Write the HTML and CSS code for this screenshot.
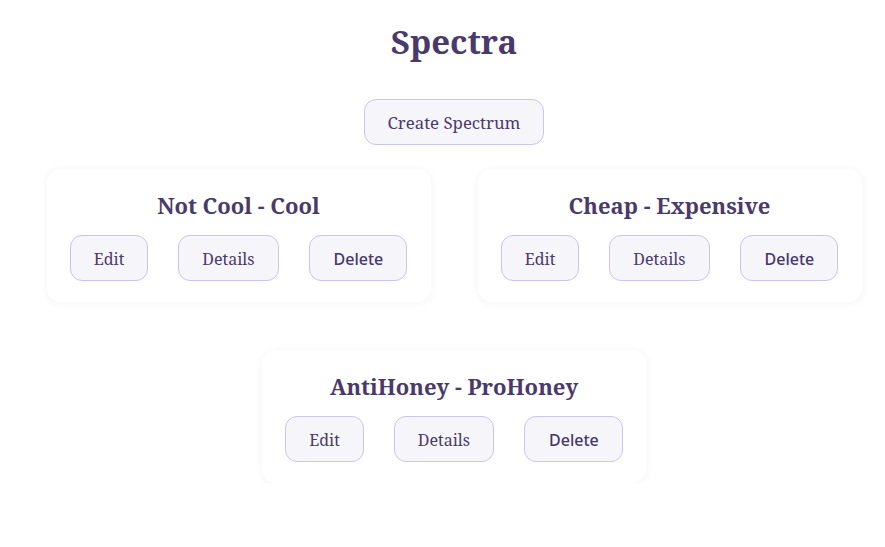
FILE: index.html
```html
<!DOCTYPE html>
<html lang="en">
<head>
<meta charset="utf-8">
<title>Spectra</title>
<link rel="stylesheet" href="styles.css">
</head>
<body>
<main class="page">
  <h1 class="title">Spectra</h1>
  <div class="create-row">
    <button class="btn btn-create">Create Spectrum</button>
  </div>
  <section class="cards">
    <div class="card">
      <h2 class="card-title">Not Cool - Cool</h2>
      <div class="actions">
        <button class="btn">Edit</button>
        <button class="btn">Details</button>
        <button class="btn btn-sans">Delete</button>
      </div>
    </div>
    <div class="card">
      <h2 class="card-title">Cheap - Expensive</h2>
      <div class="actions">
        <button class="btn">Edit</button>
        <button class="btn">Details</button>
        <button class="btn btn-sans">Delete</button>
      </div>
    </div>
    <div class="card">
      <h2 class="card-title">AntiHoney - ProHoney</h2>
      <div class="actions">
        <button class="btn">Edit</button>
        <button class="btn">Details</button>
        <button class="btn btn-sans">Delete</button>
      </div>
    </div>
  </section>
</main>
</body>
</html>
```

FILE: styles.css
```css
html, body {
  margin: 0;
  padding: 0;
  background: #ffffff;
}
body {
  font-family: "Noto Serif", "DejaVu Serif", serif;
  color: #4a3a6c;
}
.page {
  width: 816px;
  margin-left: 46px;
  display: flex;
  flex-direction: column;
  align-items: center;
}
.title {
  margin: 23px 0 38px;
  font-size: 33px;
  line-height: 38px;
  font-weight: 700;
  color: #4a3a6c;
}
.create-row {
  display: flex;
  justify-content: center;
  margin-bottom: 24px;
}
.btn {
  font-family: "Noto Serif", "DejaVu Serif", serif;
  font-size: 16px;
  line-height: 22px;
  color: #4a3a6c;
  background: #f6f5fa;
  border: 1px solid #cdc3ec;
  border-radius: 12px;
  padding: 12px 23px 10px;
  cursor: pointer;
}
.btn-create {
  font-size: 16.8px;
}
.btn-sans {
  font-family: "Noto Sans", "Open Sans", sans-serif;
  font-weight: 500;
  color: #45376a;
  padding-left: 24px;
  padding-right: 23px;
}
.cards {
  width: 100%;
  display: flex;
  flex-wrap: wrap;
  justify-content: center;
  column-gap: 47px;
  row-gap: 48px;
}
.card {
  width: 384px;
  box-sizing: border-box;
  padding: 21px 24px 21px;
  background: #ffffff;
  border-radius: 14px;
  box-shadow: 0 1px 8px rgba(60, 40, 100, 0.06);
  display: flex;
  flex-direction: column;
  align-items: center;
}
.card-title {
  margin: 0 0 15px;
  font-size: 22px;
  line-height: 30px;
  font-weight: 700;
}
.actions {
  display: flex;
  justify-content: center;
  gap: 30px;
}
```
